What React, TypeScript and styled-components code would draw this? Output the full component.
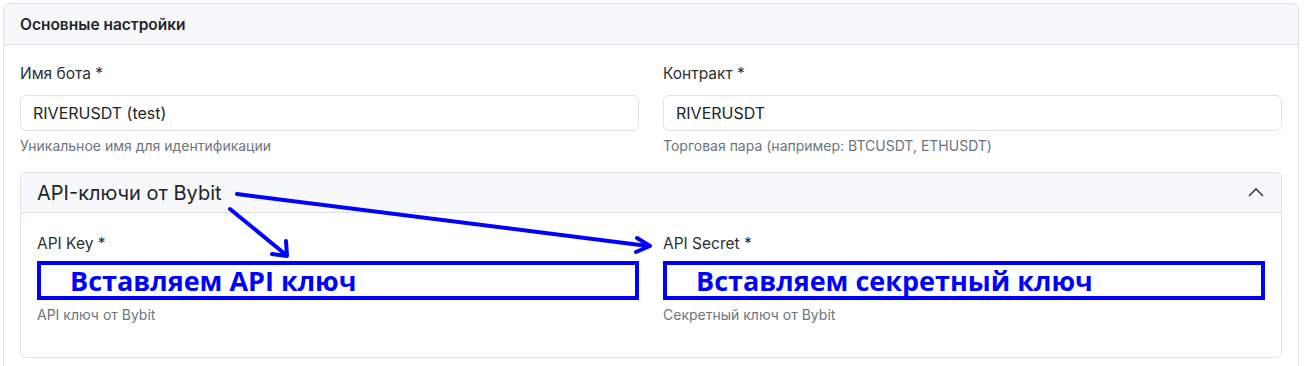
import { createGlobalStyle, styled } from "styled-components";

const GlobalStyle = createGlobalStyle`
  body {
    margin: 0;
    background: #ffffff;
    font-family: Inter, "Noto Sans", sans-serif;
    color: #212529;
  }
`;

const fields = [
  { label: "Имя бота *", value: "RIVERUSDT (test)", help: "Уникальное имя для идентификации" },
  { label: "Контракт *", value: "RIVERUSDT", help: "Торговая пара (например: BTCUSDT, ETHUSDT)" },
];

const keys = [
  { label: "API Key *", note: "Вставляем API ключ", help: "API ключ от Bybit" },
  { label: "API Secret *", note: "Вставляем секретный ключ", help: "Секретный ключ от Bybit" },
];

export default function App() {
  return (
    <Page>
      <GlobalStyle />
      <Card>
        <CardHeader>Основные настройки</CardHeader>
        <CardBody>
          <Grid>
            {fields.map((f) => (
              <Field key={f.label}>
                <Label>{f.label}</Label>
                <Input type="text" defaultValue={f.value} />
                <Help>{f.help}</Help>
              </Field>
            ))}
          </Grid>

          <Accordion>
            <AccordionHeader>
              <span>API-ключи от Bybit</span>
              <svg width="18" height="18" viewBox="0 0 18 18" fill="none">
                <polyline points="2,12 9,5 16,12" stroke="#212529" strokeWidth="1.3" />
              </svg>
            </AccordionHeader>
            <AccordionBody>
              {keys.map((k) => (
                <Field key={k.label}>
                  <Label>{k.label}</Label>
                  <Marked>{k.note}</Marked>
                  <Help>{k.help}</Help>
                </Field>
              ))}
            </AccordionBody>
          </Accordion>
        </CardBody>
      </Card>

      {/* hand-drawn annotation arrows over the form */}
      <Arrows width="1304" height="366" viewBox="0 0 1304 366">
        <g stroke="#0000ff" strokeWidth="4" strokeLinecap="round" fill="none">
          <line x1="237" y1="194" x2="648" y2="246" />
          <polyline points="637,238 650,246 636,252" strokeLinejoin="round" />
          <line x1="230" y1="209" x2="285" y2="254" />
          <polyline points="286,241 287,256 272,254" strokeLinejoin="round" />
        </g>
      </Arrows>
    </Page>
  );
}

const Page = styled.div`
  position: relative;
  padding: 3px 5px 0 3px;
`;

const Card = styled.div`
  border: 1px solid #dee2e6;
  border-radius: 6px;
  background: #ffffff;
`;

const CardHeader = styled.div`
  height: 40px;
  display: flex;
  align-items: center;
  padding: 0 16px;
  background: #f7f8fa;
  border-bottom: 1px solid #dee2e6;
  border-radius: 6px 6px 0 0;
  font-size: 15.5px;
  font-weight: 600;
  color: #212529;
`;

const CardBody = styled.div`
  padding: 18px 16px 16px;
`;

const Grid = styled.div`
  display: grid;
  grid-template-columns: 1fr 1fr;
  gap: 24px;
`;

const Field = styled.div`
  display: flex;
  flex-direction: column;
`;

const Label = styled.label`
  font-size: 15.5px;
  line-height: 22px;
  color: #2b2f33;
  margin-bottom: 10px;
`;

const Input = styled.input`
  height: 36px;
  box-sizing: border-box;
  border: 1px solid #dee2e6;
  border-radius: 6px;
  padding: 0 12px;
  font-family: inherit;
  font-size: 16px;
  color: #212529;
  outline: none;
`;

const Help = styled.div`
  margin-top: 5px;
  font-size: 14px;
  line-height: 20px;
  color: #6c757d;
`;

const Accordion = styled.div`
  margin-top: 16px;
  border: 1px solid #dee2e6;
  border-radius: 6px;
`;

const AccordionHeader = styled.div`
  height: 39px;
  display: flex;
  align-items: center;
  justify-content: space-between;
  padding: 0 16px;
  background: #f7f8fa;
  border-bottom: 1px solid #dee2e6;
  border-radius: 6px 6px 0 0;
  font-size: 20px;
  color: #212529;
`;

const AccordionBody = styled.div`
  display: grid;
  grid-template-columns: 1fr 1fr;
  gap: 24px;
  padding: 20px 16px 32px;

  ${Label} {
    margin-bottom: 6px;
  }
`;

const Marked = styled.div`
  height: 39px;
  box-sizing: border-box;
  border: 4px solid #0000ff;
  padding-left: 29px;
  display: flex;
  align-items: center;
  font-family: "Open Sans", "Noto Sans", sans-serif;
  font-weight: 700;
  font-size: 27px;
  color: #0000ff;
  white-space: nowrap;
`;

const Arrows = styled.svg`
  position: absolute;
  left: 0;
  top: 0;
  pointer-events: none;
`;
